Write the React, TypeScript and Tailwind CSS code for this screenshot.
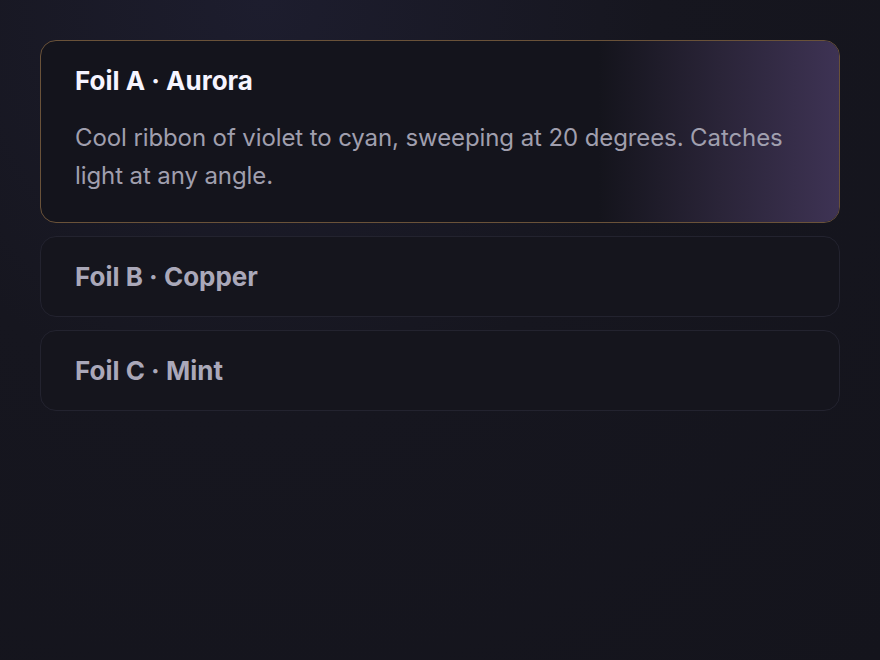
import { useState } from 'react'

const foils = [
  {
    id: 'a',
    name: 'Foil A · Aurora',
    body: 'Cool ribbon of violet to cyan, sweeping at 20 degrees. Catches light at any angle.',
  },
  { id: 'b', name: 'Foil B · Copper', body: 'Warm copper sheen with a soft falloff.' },
  { id: 'c', name: 'Foil C · Mint', body: 'Pale mint shimmer, subtle and fresh.' },
]

export default function App() {
  const [open, setOpen] = useState('a')

  return (
    <div
      className="min-h-[660px] w-full bg-[#14141c] bg-[radial-gradient(ellipse_at_30%_0%,#1d1d2e_0%,#16161f_45%,#14141c_100%)] px-10 pt-10"
      style={{ fontFamily: 'Inter, "Noto Sans", sans-serif' }}
    >
      <div className="flex flex-col gap-[13px]">
        {foils.map(f => {
          const active = open === f.id
          return (
            <button
              key={f.id}
              onClick={() => setOpen(f.id)}
              className={
                active
                  ? 'relative overflow-hidden rounded-2xl border border-[#6a5239] bg-[#14141c] px-[34px] pt-6 pb-[27px] text-left'
                  : 'relative overflow-hidden rounded-2xl border border-[#23232f] bg-[#15151d] px-[34px] pt-6 pb-[23px] text-left'
              }
            >
              {active && (
                <div className="pointer-events-none absolute inset-y-0 right-0 w-[240px] bg-gradient-to-r from-transparent via-[#2a2438] to-[#3e3354]" />
              )}
              <div className="relative">
                <p
                  className={
                    active
                      ? 'text-[26px] leading-8 font-bold text-[#f6f4ff]'
                      : 'text-[26px] leading-8 font-bold text-[#aaa8b9]'
                  }
                >
                  {f.name}
                </p>
                {active && (
                  <p className="mt-[22px] text-[24px] leading-[38px] tracking-[-0.1px] text-[#a09fae]">{f.body}</p>
                )}
              </div>
            </button>
          )
        })}
      </div>
    </div>
  )
}
